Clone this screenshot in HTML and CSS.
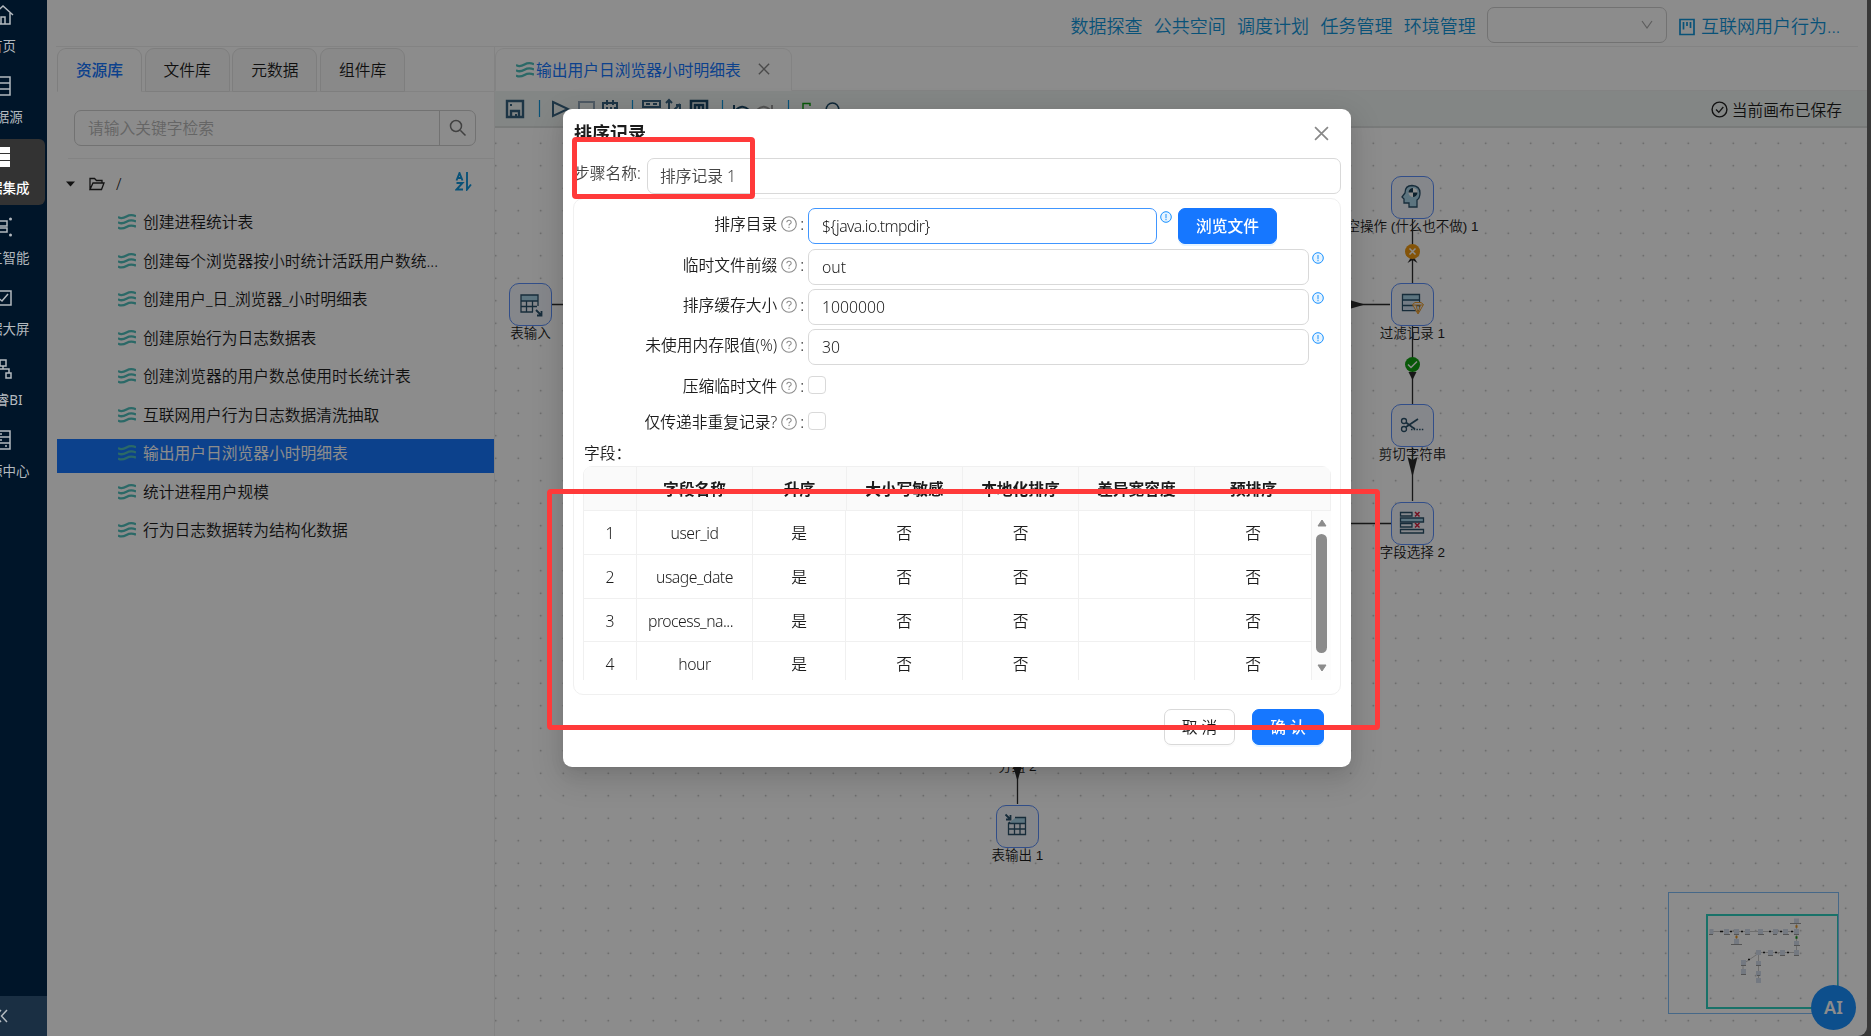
FILE: index.html
```html
<!DOCTYPE html>
<html lang="zh">
<head>
	<meta charset="UTF-8">
	<meta name="viewport" content="width=device-width, initial-scale=1.0">
	<title>数据集成</title>
	<link rel="stylesheet" href="styles.css">
</head>
<body>
	<!-- shared icons -->
	<svg class="defs">
		<symbol id="flow" viewBox="0 0 18 16"><path d="M0 3 C3 5 5.500 4.200 8.500 2.500 S14.500 .8 18 2.200 M0 8.200 C3 10.200 5.500 9.400 8.500 7.700 S14.500 6 18 7.400 M0 13.400 C3 15.400 5.500 14.600 8.500 12.900 S14.500 11.200 18 12.600" fill="none" stroke="#4fbfbc" stroke-width="2.300"/></symbol>
		<symbol id="help" viewBox="0 0 16 16"><circle cx="8" cy="8" r="7.300" fill="none" stroke="#8c8c8c" stroke-width="1.100"/><path d="M5.800 6.300 Q5.900 4.200 8 4.200 T10.200 6.200 Q10.200 7.300 8.900 7.900 Q8 8.300 8 9.500 M8 10.700 V12" fill="none" stroke="#8c8c8c" stroke-width="1.100"/></symbol>
		<symbol id="info" viewBox="0 0 12 12"><circle cx="6" cy="6" r="5.300" fill="#e6f4ff" stroke="#1890ff" stroke-width="1"/><path d="M6 3 V7.300 M6 8 V9.200" stroke="#1890ff" stroke-width="1"/></symbol>
		<symbol id="close" viewBox="0 0 14 14"><path d="M1 1 L13 13 M13 1 L1 13" fill="none" stroke="#888" stroke-width="1.600"/></symbol>
	</svg>

	<div class="layout">
		<div class="sider">
			<div class="menu">
				<div class="menu-item"><svg width="22" height="22" viewBox="0 0 22 22"><path d="M1 11 L11 2 L21 11 M4 9 V20 H18 V9 M9 20 V13 H13 V20"/></svg><span>首页</span></div>
				<div class="menu-item"><svg width="22" height="22" viewBox="0 0 22 22"><path d="M4 2 H18 V20 H4 Z M4 8 H18 M4 14 H18"/></svg><span>数据源</span></div>
				<div class="menu-item active"><svg width="22" height="22" viewBox="0 0 22 22"><path class="solid" d="M2 1 H18 V7 H2 Z M2 8 H18 V14 H2 Z M2 15 H18 V21 H2 Z"/></svg><span>数据集成</span></div>
				<div class="menu-item"><svg width="22" height="22" viewBox="0 0 22 22"><path d="M4 5 H15 V10 H4 Z M4 12 H15 V16 H4 Z M1 3 V18"/><circle class="solid" cx="18.500" cy="3" r="1.500"/><circle class="solid" cx="18.500" cy="19" r="1.500"/></svg><span>人工智能</span></div>
				<div class="menu-item"><svg width="22" height="22" viewBox="0 0 22 22"><path d="M2 4 H19 V18 H2 Z M5 10 L10 14 L16 7"/></svg><span>数据大屏</span></div>
				<div class="menu-item"><svg width="22" height="22" viewBox="0 0 22 22"><path d="M8 2 H14 V8 H8 Z M2 15 H7 V20 H2 Z M14 15 H19 V20 H14 Z M11 8 V11 M4 15 V11 H17 V15"/></svg><span>智睿BI</span></div>
				<div class="menu-item"><svg width="22" height="22" viewBox="0 0 22 22"><path d="M2 2 H18 V20 H2 Z M2 8 H18 M2 14 H18 M7 5 H10 M7 11 H10 M13 17 H15"/></svg><span>资源中心</span></div>
			</div>
			<div class="collapse"><svg width="14" height="14" viewBox="0 0 14 14"><path d="M7 1 L1.500 7 L7 13 M13 1 L7.500 7 L13 13"/></svg></div>
		</div>

		<div class="main">
			<div class="header">
				<a>数据探查</a><a>公共空间</a><a>调度计划</a><a>任务管理</a><a>环境管理</a>
				<div class="select"><svg width="12" height="10" viewBox="0 0 12 10"><path d="M1 1 L6 8 L11 1" fill="none" stroke="#aaa" stroke-width="1.200"/></svg></div>
				<svg class="project-icon" width="16" height="18" viewBox="0 0 16 18"><path d="M1 1.500 H15 V16.500 H1 Z M4.500 4 V11.500 M8 4 V8 M11.500 4 V10" fill="none" stroke="#1296db" stroke-width="1.700"/></svg>
				<a class="project">互联网用户行为...</a>
			</div>
			<div class="content">
				<div class="library">
					<div class="tabs">
						<div class="tab on">资源库</div>
						<div class="tab">文件库</div>
						<div class="tab">元数据</div>
						<div class="tab">组件库</div>
					</div>
					<div class="search">
						<span>请输入关键字检索</span>
						<div class="search-btn"><svg width="18" height="18" viewBox="0 0 18 18"><path d="M11.500 11.500 L16.500 16.500 M1.500 7 A5.500 5.500 0 1 0 12.500 7 A5.500 5.500 0 1 0 1.500 7" fill="none" stroke="#777" stroke-width="1.500"/></svg></div>
					</div>
					<div class="root">
						<svg width="9" height="6" viewBox="0 0 9 6"><path d="M0 .5 H9 L4.500 5.500 Z" fill="#222"/></svg>
						<svg class="folder" width="16" height="14" viewBox="0 0 16 14"><path d="M1 12.500 V1.500 H5.500 L7.500 3.500 H13 V6 M1 12.500 L4 6 H15 L12.500 12.500 Z" fill="none" stroke="#222" stroke-width="1.300"/></svg>
						<span>/</span>
						<svg class="sort" width="18" height="19" viewBox="0 0 18 19"><path d="M1.500 8.500 L4.500 1 L7.500 8.500 M2.500 6 H6.500 M1.500 11 H7.500 L1.500 17.500 H8 M12 0 V17.500 L16 12.500" fill="none" stroke="#1296db" stroke-width="1.900"/></svg>
					</div>
					<div class="tree">
						<div class="leaf"><svg><use href="#flow"/></svg>创建进程统计表</div>
						<div class="leaf"><svg><use href="#flow"/></svg>创建每个浏览器按小时统计活跃用户数统...</div>
						<div class="leaf"><svg><use href="#flow"/></svg>创建用户_日_浏览器_小时明细表</div>
						<div class="leaf"><svg><use href="#flow"/></svg>创建原始行为日志数据表</div>
						<div class="leaf"><svg><use href="#flow"/></svg>创建浏览器的用户数总使用时长统计表</div>
						<div class="leaf"><svg><use href="#flow"/></svg>互联网用户行为日志数据清洗抽取</div>
						<div class="leaf selected"><svg><use href="#flow"/></svg>输出用户日浏览器小时明细表</div>
						<div class="leaf"><svg><use href="#flow"/></svg>统计进程用户规模</div>
						<div class="leaf"><svg><use href="#flow"/></svg>行为日志数据转为结构化数据</div>
					</div>
				</div>

				<div class="editor">
					<div class="file-tabs">
						<div class="file-tab"><svg class="flow"><use href="#flow"/></svg><span>输出用户日浏览器小时明细表</span><svg class="x"><use href="#close"/></svg></div>
					</div>
					<div class="toolbar">
						<svg width="360" height="36" viewBox="0 0 360 36" fill="none" stroke="#36617f" stroke-width="2">
							<path d="M12 10 H28 V26 H12 Z M16 26 V20 H24 V26" stroke-width="2.400"/><path d="M15 14 h2 M21 23 v2"/>
							<path d="M44.500 9 V26 M137.500 9 V26 M227.500 9 V26 M293.500 9 V26" stroke="#1296db" stroke-width="1.200"/>
							<path d="M58 11 L73 18 L58 25 Z"/>
							<path d="M84 11 H99 V26 H84 Z" stroke="#8fa3b5"/>
							<path d="M108 12 H122 V26 H108 Z M112 9 V14 M118 9 V14 M111 17 h2 M115 17 h2 M119 17 h2"/>
							<path d="M148 10 H165 V16 H148 Z M151 13 h4 M158 13 h4"/>
							<path d="M174 9 V24 M171 12 L174 9 L177 12 M177 21 L185 13 M181 14 h4 v4"/>
							<path d="M196 10 H212 V26 H196 Z M200 20 V14 H208 V20 M204 14 V20" stroke="#1b4765" stroke-width="2.600"/>
							<path d="M239 14 V20 H245 M240 20 Q247 12 254 19" stroke="#1b4765"/>
							<path d="M277 14 V20 H271 M276 20 Q269 12 262 19" stroke="#999"/>
							<path d="M308 19 V12.500 H315 V15 M304 19 H316 V27 H304 Z" stroke="#10a010" stroke-width="1.500"/>
							<path d="M329 19 H331 Q332 12 337.500 12 T344 19 H346" stroke="#1b4765" stroke-width="1.500"/>
						</svg>
						<div class="saved"><svg width="17" height="17" viewBox="0 0 17 17"><path d="M5 8.500 L7.800 11.300 L12.300 6" fill="none" stroke="#222" stroke-width="1.300"/><circle cx="8.500" cy="8.500" r="7.400" fill="none" stroke="#222" stroke-width="1.400"/></svg>当前画布已保存</div>
					</div>
					<div class="canvas">
						<!-- links, in canvas coordinates -->
						<svg class="links" width="1372" height="908" viewBox="495 128 1372 908">
							<path d="M552 304.500 H600 M1300 304.500 H1390 M1300 523.500 H1391 M1412.500 219 V283 M1412.500 326 V404 M1412.500 448 V501 M1017.500 750 V804" stroke="#2b2b2b" stroke-width="1.300"/>
							<path d="M1351 300.500 L1365 304.500 L1351 308.500 Z M1408.500 372 H1416.500 L1412.500 380 Z M1407.500 457 L1412.500 460 L1417.500 457 L1412.500 477 Z M1407.500 263 L1412.500 255 L1417.500 263 L1412.500 260 Z M1013 766 H1022 L1017.500 781 Z" fill="#2b2b2b"/>
							<circle cx="1412.500" cy="251.500" r="7.500" fill="#f09a12"/><path d="M1409.500 248.500 l6 6 m0 -6 l-6 6" stroke="#fff" stroke-width="1.500"/>
							<circle cx="1412.500" cy="364.500" r="7.500" fill="#10a010"/><path d="M1408 364.500 l3 3 l6 -6" fill="none" stroke="#fff" stroke-width="1.500"/>
						</svg>
						<div class="node" style="left:14px;top:155px"><svg viewBox="0 0 43 43"><path d="M12 12 H29 V18 H12 Z" fill="#a8d3e8" stroke="none"/><path d="M24 29 H12 V12 H29 V23 M12 18 H29 M12 23.500 H28 M17.500 18 V29 M23.500 18 V29"/><path d="M27 27 L32 32 M28 32.500 H32.500 V28" stroke-width="1.800"/></svg><span>表输入</span></div>
						<div class="node" style="left:896px;top:48px"><svg viewBox="0 0 43 43"><path d="M18 31 V27 H13 V23 L11 21 L14 17 Q14 9.500 21 9.500 Q29 10 29 17 Q29 22 26 24 V31 Z" fill="#a8d3e8"/><circle cx="22" cy="16.500" r="4.500" fill="#fff" stroke="none"/><path d="M22 12 V16.500 H17.500 A4.500 4.500 0 0 1 22 12 M22 21 V16.500 H26.500 A4.500 4.500 0 0 1 22 21" fill="#173d55" stroke="none"/></svg><span>空操作 (什么也不做) 1</span></div>
						<div class="node" style="left:896px;top:155px"><svg viewBox="0 0 43 43"><path d="M11.500 11.500 H28.500 V27.500 H11.500 Z" fill="#a8d3e8"/><path d="M12 18 H28 V22 H12 Z M12 23 H28 V27 H12 Z" fill="#d3e2f2" stroke="none"/><path d="M11.500 17 H28.500 M11.500 22.500 H28.500"/><path d="M21.500 21.500 L24 19.500 H30 L32.500 21.500 L27 31 Z M22 22 H32 M25 22 L27 30 L29.500 22" fill="#e8eefc" stroke="#eb9c2c" stroke-width="1"/></svg><span>过滤记录 1</span></div>
						<div class="node" style="left:896px;top:276px"><svg viewBox="0 0 43 43"><circle cx="13" cy="17" r="2.500"/><circle cx="13" cy="25" r="2.500"/><path d="M15 23 L27 15 M15 18.500 L21 23 L24 25" stroke-width="1.700"/><path d="M20 25.500 H33" stroke-dasharray="1.500 1.200"/></svg><span>剪切字符串</span></div>
						<div class="node" style="left:896px;top:374px"><svg viewBox="0 0 43 43"><path d="M9.500 10.500 H21 V14 H9.500 Z M9.500 21.500 H21 V25 H9.500 Z M9.500 27.500 H32.500 V31 H9.500 Z"/><path d="M9.500 16 H32.500 V20 H9.500 Z" fill="#a8d3e8"/><path d="M24 10 l4.500 4.500 m0 -4.500 l-4.500 4.500 M24 21 l4.500 4.500 m0 -4.500 l-4.500 4.500" stroke="#d3203d" stroke-width="1.500"/></svg><span>字段选择 2</span></div>
						<div class="node" style="left:501px;top:588px"><span>分组 2</span></div>
						<div class="node" style="left:501px;top:677px"><svg viewBox="0 0 43 43"><path d="M13 18 L19 13 H30 V18 Z" fill="#a8d3e8" stroke="none"/><path d="M19 12.500 H29.500 V29.500 H12.500 V18 L14 17 M12.500 18.500 H29.500 M12.500 24 H29.500 M18.500 18 V29 M24 18 V29"/><path d="M9.500 9.500 L14 14 M10 14.500 H14.500 V10" stroke-width="1.800"/></svg><span>表输出 1</span></div>

						<div class="minimap">
							<svg width="171" height="122" viewBox="1668 892 171 122">
								<path d="M1711 931.500 H1797 M1796.500 922 V952 M1736.500 932 V941 M1759 952.500 H1796 M1759 953 L1743 964 V972 M1758.500 953 V981" fill="none" stroke="#c8c8c8"/>
								<path fill="#d3dcec" d="M1709.500 929 h4v5h-4z M1724 929 h5v5h-5z M1734 929 h5v5h-5z M1745 929 h5v5h-5z M1758 929 h5v5h-5z M1773 929 h5v5h-5z M1783 929 h5v5h-5z M1794 929 h5v5h-5z M1794 918.500 h5v5h-5z M1734 939 h5v5h-5z M1794 941 h5v5h-5z M1794 950 h5v5h-5z M1780 950 h5v5h-5z M1768 950 h5v5h-5z M1756 950 h5v5h-5z M1741 960 h5v5h-5z M1741 969 h5v5h-5z M1756 961 h5v5h-5z M1756 971 h5v5h-5z M1756 978 h5v5h-5z"/>
								<path d="M1709 934.500h4 M1724 934.500h6 M1734 934.500h5 M1745 934.500h5 M1758 934.500h6 M1773 934.500h4 M1783 934.500h6 M1794 934.500h5 M1790 923.500h11 M1731 944.500h11 M1794 945.500h6 M1794 955.500h5 M1780 955.500h5 M1768 955.500h5 M1741 965.500h5 M1741 974.500h5 M1756 965.500h5 M1757 975.500h3" stroke="#9a9a9a"/>
								<path d="M1720 931.500h3 M1730 931.500h2 M1741 931.500h2 M1769 931.500h2 M1780 931.500h2 M1791 931.500h2 M1763 952.500h2 M1775 952.500h2 M1787 952.500h2 M1748 959.500h2" stroke="#222" stroke-width="1.500"/>
								<path d="M1795.500 926.500h2 M1735.500 937h2" stroke="#e8931b" stroke-width="2.500"/><path d="M1795.500 937.500h2" stroke="#109010" stroke-width="2.500"/>
								<path d="M1707 915 H1838 V1008 H1707 Z" fill="none" stroke="#2fcfbf" stroke-width="2"/>
							</svg>
						</div>
						<div class="ai">AI</div>
					</div>
				</div>
			</div>
		</div>
	</div>

	<div class="mask">
		<div class="modal">
			<div class="modal-head"><span>排序记录</span><svg width="15" height="15"><use href="#close"/></svg></div>
			<div class="step"><label>步骤名称:</label><div class="input">排序记录 1</div></div>
			<div class="panel">
				<div class="form">
					<div class="row first"><label>排序目录<svg><use href="#help"/></svg>:</label><div class="input focus">${java.io.tmpdir}</div><svg class="info"><use href="#info"/></svg><div class="btn primary">浏览文件</div></div>
					<div class="row"><label>临时文件前缀<svg><use href="#help"/></svg>:</label><div class="input">out</div><svg class="info"><use href="#info"/></svg></div>
					<div class="row"><label>排序缓存大小<svg><use href="#help"/></svg>:</label><div class="input">1000000</div><svg class="info"><use href="#info"/></svg></div>
					<div class="row"><label>未使用内存限值(%)<svg><use href="#help"/></svg>:</label><div class="input">30</div><svg class="info"><use href="#info"/></svg></div>
					<div class="row check"><label>压缩临时文件<svg><use href="#help"/></svg>:</label><div class="checkbox"></div></div>
					<div class="row check"><label>仅传递非重复记录?<svg><use href="#help"/></svg>:</label><div class="checkbox"></div></div>
				</div>
				<div class="fields-label">字段：</div>
				<div class="table">
					<div class="tr th"><div></div><div>字段名称</div><div>升序</div><div>大小写敏感</div><div>本地化排序</div><div>差异宽容度</div><div>预排序</div><div></div></div>
					<div class="tbody">
						<div class="rows">
							<div class="tr"><div>1</div><div class="name">user_id</div><div>是</div><div>否</div><div>否</div><div></div><div>否</div></div>
							<div class="tr"><div>2</div><div class="name">usage_date</div><div>是</div><div>否</div><div>否</div><div></div><div>否</div></div>
							<div class="tr"><div>3</div><div class="name cut">process_na...</div><div>是</div><div>否</div><div>否</div><div></div><div>否</div></div>
							<div class="tr"><div>4</div><div class="name">hour</div><div>是</div><div>否</div><div>否</div><div></div><div>否</div></div>
						</div>
						<div class="scroll">
							<svg width="10" height="8" viewBox="0 0 10 8"><path d="M5 1 L9 7 H1 Z" fill="#8b8b8b" stroke="#8b8b8b" stroke-linejoin="round"/></svg>
							<div class="thumb"></div>
							<svg width="10" height="8" viewBox="0 0 10 8"><path d="M5 7 L9 1 H1 Z" fill="#8b8b8b" stroke="#8b8b8b" stroke-linejoin="round"/></svg>
						</div>
					</div>
				</div>
			</div>
			<div class="footer"><div class="btn">取 消</div><div class="btn primary">确 认</div></div>
		</div>
	</div>
	<div class="mark mark-name"></div>
	<div class="mark mark-table"></div>
</body>
</html>
```
FILE: styles.css
```css
* {
	box-sizing: border-box;
}
body {
	margin: 0;
	height: 1036px;
	overflow: hidden;
	background: #666;
	color: #1c1c1c;
	font: 350 15.75px/24px "Noto Sans", "Noto Sans CJK SC", sans-serif;
}
svg {
	display: block;
	flex: none;
}
.defs {
	position: absolute;
	width: 0;
	height: 0;
}
.layout {
	display: flex;
	height: 1036px;
}

/* sidebar, sits above the mask */
.sider {
	position: relative;
	z-index: 5;
	width: 47px;
	flex: none;
	overflow: hidden;
	background: #001529;
	display: flex;
	flex-direction: column;
	justify-content: space-between;
}
.menu {
	width: 86px;
	margin-left: -40px;
	padding: 0 1px 0 0;
	margin-top: -3px;
}
.menu-item {
	height: 66px;
	margin-bottom: 4.8px;
	border-radius: 6px;
	display: flex;
	flex-direction: column;
	align-items: center;
	padding-top: 7px;
	color: #b3b9bf;
	font-size: 13.5px;
	font-weight: 400;
	line-height: 20px;
	white-space: nowrap;
}
.menu-item svg, .collapse svg {
	fill: none;
	stroke: #b3b9bf;
	stroke-width: 1.5;
}
.menu-item .solid {
	fill: #b3b9bf;
	stroke: none;
}
.menu-item span {
	margin-top: 10px;
}
.menu-item.active {
	background: #333;
	color: #fff;
	font-weight: 500;
}
.menu-item.active .solid {
	fill: #fff;
}
.collapse {
	height: 40px;
	padding: 13px 0 0 0;
	background: #1a2f43;
}
.collapse svg {
	margin-left: -6px;
}

.main {
	width: 1820px;
	background: #fff;
	border-radius: 0 0 9px 0;
	overflow: hidden;
}
.header {
	height: 47px;
	margin: 0 9px;
	border-bottom: 1px solid #eee;
	display: flex;
	align-items: center;
	justify-content: flex-end;
	padding: 4px 18px 0 0;
	color: #1296db;
	font-size: 18px;
}
.header a {
	margin: 2px 11.3px 0 0;
	white-space: nowrap;
}
.select {
	width: 180px;
	height: 36px;
	margin-right: 12px;
	border: 1px solid #d0d0d0;
	border-radius: 7px;
	display: flex;
	align-items: center;
	justify-content: flex-end;
	padding-right: 13px;
}
.project-icon {
	margin-top: 3px;
}
.header .project {
	width: 139px;
	margin: 2px 0 0 6px;
}
.content {
	display: flex;
	padding-left: 10px;
	height: 989px;
}

/* left panel */
.library {
	width: 438px;
	border-right: 1px solid #eee;
}
.tabs {
	display: flex;
	gap: 2.7px;
	height: 45px;
	padding-top: 1px;
	border-bottom: 1px solid #eee;
}
.tab {
	width: 85px;
	height: 44px;
	border: 1px solid #e6e6e6;
	border-radius: 9px 9px 0 0;
	background: #fafafa;
	text-align: center;
	line-height: 43px;
}
.tab.on {
	border-bottom-color: #fff;
	background: #fff;
	color: #1677ff;
	font-weight: 500;
}
.search {
	width: 402px;
	height: 36px;
	margin: 18px 0 0 17px;
	border: 1px solid #d0d0d0;
	border-radius: 7px;
	display: flex;
	justify-content: space-between;
	padding-left: 13px;
	line-height: 34px;
	color: #b8b8b8;
}
.search-btn {
	width: 36px;
	border-left: 1px solid #d0d0d0;
	display: grid;
	place-items: center;
}
.root {
	height: 50px;
	margin: 12px 0 0 11px;
	border-top: 1px solid #eee;
	display: flex;
	align-items: center;
}
.root .folder {
	margin: 0 11px 0 14px;
}
.root > svg:first-child {
	margin-left: -2px;
}
.root .sort {
	margin: -4px 21px 0 auto;
}
.leaf {
	height: 34px;
	margin-bottom: 4.5px;
	padding-left: 61px;
	display: flex;
	line-height: 29px;
	white-space: nowrap;
}
.leaf svg {
	width: 18px;
	height: 16px;
	margin: 6px 7px 0 0;
}
.leaf.selected {
	background: #1677ff;
	color: #fff;
	font-weight: 400;
}

/* editor */
.editor {
	flex: 1;
	display: flex;
	flex-direction: column;
}
.file-tabs {
	height: 44px;
	padding-top: 1px;
	border-bottom: 1px solid #eee;
}
.file-tab {
	width: 297px;
	height: 43px;
	border: 1px solid #eee;
	border-bottom-color: #fff;
	border-radius: 9px 9px 0 0;
	display: flex;
	align-items: center;
	padding-left: 20px;
	color: #1677ff;
	font-weight: 400;
}
.file-tab .flow {
	width: 18px;
	height: 16px;
	margin-right: 2px;
}
.file-tab .x {
	width: 12px;
	height: 12px;
	margin: -2px 0 0 17px;
}
.toolbar {
	height: 37px;
	background: #eff4f2;
	border-bottom: 2px solid #dde0df;
	display: flex;
	justify-content: space-between;
}
.saved {
	display: flex;
	align-items: center;
	gap: 4px;
	padding: 2px 25px 0 0;
}
.canvas {
	position: relative;
	flex: 1;
	background-image: radial-gradient(circle, #aaa 0.6px, transparent 1.1px);
	background-size: 22.5px 22.5px;
	background-position: -10.5px 4px;
}
.links {
	position: absolute;
	left: 0;
	top: 0;
	z-index: 2;
}
.node {
	position: absolute;
	width: 43px;
	height: 43px;
	border: 1.5px solid #5b8ff9;
	border-radius: 10px;
	background: #f3f6fd;
}
.node svg {
	width: 43px;
	height: 43px;
	margin: -1px;
	fill: none;
	stroke: #2a516b;
	stroke-width: 1.3;
}
.node span {
	position: absolute;
	top: 41px;
	left: 50%;
	transform: translateX(-50%);
	font: 350 13.5px/18px "Liberation Sans", "Noto Sans CJK SC", sans-serif;
	white-space: nowrap;
}
.minimap {
	position: absolute;
	left: 1173px;
	top: 764px;
	width: 171px;
	height: 122px;
	outline: 1px solid #80bdf7;
	outline-offset: -1px;
}
.ai {
	position: absolute;
	z-index: 3;
	left: 1316px;
	top: 857px;
	width: 45px;
	height: 45px;
	border-radius: 50%;
	background: #1890ff;
	color: #fff;
	font-size: 18px;
	font-weight: 600;
	line-height: 45px;
	text-align: center;
}

/* dialog */
.mask {
	position: fixed;
	inset: 0;
	z-index: 4;
	padding: 109px 0 0 563px;
	background: rgba(0, 0, 0, .45);
}
.modal {
	width: 788px;
	height: 658px;
	padding: 0 10px;
	border-radius: 9px;
	background: #fff;
	box-shadow: 0 7px 18px rgba(0, 0, 0, .08), 0 3px 7px -4px rgba(0, 0, 0, .12), 0 10px 32px 9px rgba(0, 0, 0, .1);
}
.modal-head {
	height: 49px;
	display: flex;
	justify-content: space-between;
	padding: 12px 12px 0 1px;
	font-size: 18px;
	font-weight: 600;
}
.modal-head svg {
	margin-top: 5px;
}
.step {
	display: flex;
}
.step label {
	width: 74px;
	padding-left: 1px;
	line-height: 30px;
	white-space: nowrap;
	color: #444;
}
.step .input {
	padding-left: 12px;
	color: #444;
}
.input {
	flex: 1;
	height: 36px;
	border: 1px solid #d9d9d9;
	border-radius: 7px;
	padding-left: 13px;
	line-height: 35px;
}
.panel {
	height: 497px;
	margin-top: 4px;
	padding: 9px 9px 0 9px;
	border: 1px solid #f0f0f0;
	border-radius: 10px;
}
.row {
	display: flex;
	height: 40px;
	padding-right: 5px;
}
.row.first {
	height: 41px;
}
.row label {
	width: 225px;
	padding-right: 4px;
	display: flex;
	justify-content: flex-end;
	line-height: 32px;
}
.row label svg {
	width: 16px;
	height: 16px;
	margin: 8px 3px 0 4px;
}
.row .info {
	width: 12px;
	height: 12px;
	margin: 3px 2px 0 3px;
}
.row.first .input {
	flex: none;
	width: 349px;
}
.row .focus {
	border-color: #4096ff;
	letter-spacing: -.6px;
}
.row.first .btn {
	margin-left: 4px;
	width: 99px;
}
.row.check {
	height: 36px;
	padding-top: 1px;
}
.checkbox {
	width: 18px;
	height: 18px;
	margin-top: 6px;
	border: 1px solid #d9d9d9;
	border-radius: 4px;
}
.btn {
	height: 36px;
	border: 1px solid #d9d9d9;
	border-radius: 7px;
	line-height: 34px;
	text-align: center;
	white-space: nowrap;
	box-shadow: 0 2px 0 rgba(0, 0, 0, .02);
}
.btn.primary {
	border-color: #1677ff;
	background: #1677ff;
	color: #fff;
	font-weight: 500;
	box-shadow: 0 2px 0 rgba(5, 145, 255, .1);
}
.fields-label {
	height: 25px;
	padding-left: 1px;
	line-height: 25px;
}
.table {
	height: 214px;
	border-left: 1px solid #f0f0f0;
	border-radius: 9px 9px 0 0;
	overflow: hidden;
}
.tr {
	display: grid;
	grid-template-columns: 53px 116px 93px 117px 116px 116px 117px;
	height: 44px;
	line-height: 44px;
	text-align: center;
	border-bottom: 1px solid #f0f0f0;
}
.tr:nth-child(3) {
	height: 43px;
}
.tr > div {
	border-right: 1px solid #f0f0f0;
}
.tr .name {
	letter-spacing: -.5px;
}
.tr .cut {
	padding-right: 8px;
}
.th {
	grid-template-columns: 53px 116px 94px 116px 116px 116px 117px 19px;
	height: 45px;
	border-top: 1px solid #f0f0f0;
	background: #fafafa;
	font-weight: 600;
}
.th > div:nth-child(7) {
	border-right: none;
}
.tbody {
	display: flex;
}
.scroll {
	width: 19px;
	height: 169px;
	background: #fcfcfc;
	display: flex;
	flex-direction: column;
	align-items: center;
	gap: 7px;
	padding-top: 8px;
}
.thumb {
	width: 11px;
	height: 119px;
	border-radius: 6px;
	background: #8b8b8b;
}
.scroll svg:last-child {
	margin-top: 4px;
}
.footer {
	display: flex;
	justify-content: flex-end;
	gap: 17px;
	padding: 14px 17px 0 0;
}
.footer .btn {
	width: 71px;
}
.footer .btn.primary {
	width: 72px;
}

/* red highlight frames over the dialog */
.mark {
	position: fixed;
	z-index: 6;
	border: 5px solid #ff3a3a;
	border-radius: 4px;
}
.mark-name {
	left: 572px;
	top: 137px;
	width: 183px;
	height: 62px;
}
.mark-table {
	left: 547px;
	top: 489px;
	width: 833px;
	height: 241px;
}
```
